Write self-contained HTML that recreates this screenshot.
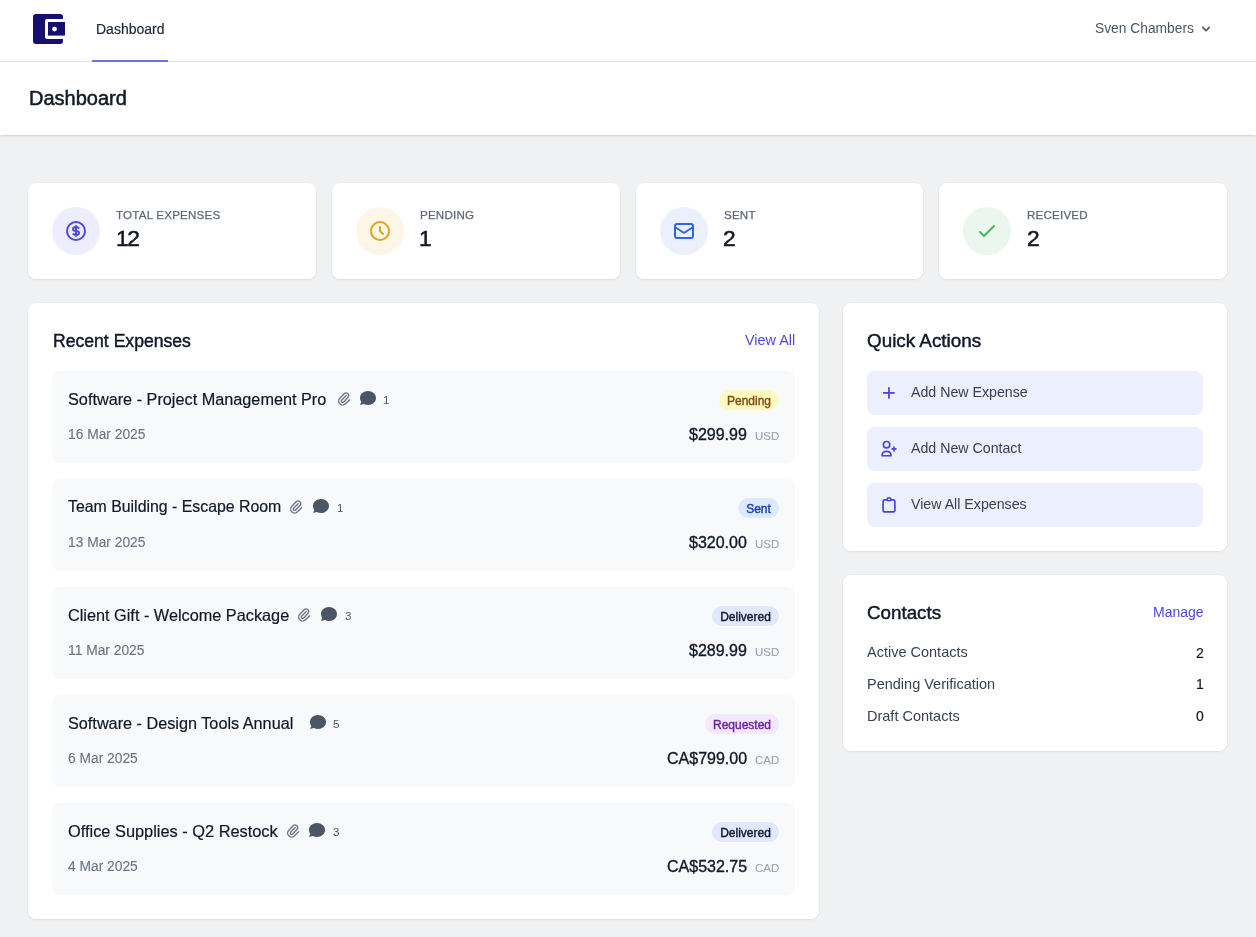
<!DOCTYPE html>
<html><head><meta charset="utf-8"><title>Dashboard</title>
<style>
html,body{margin:0;padding:0;}
body{width:1256px;height:937px;position:relative;overflow:hidden;background:#f0f1f3;font-family:"Liberation Sans",sans-serif;}
.t{position:absolute;white-space:nowrap;will-change:transform;}
svg{display:block;}
</style></head><body>
<div style="position:absolute;left:0px;top:0px;width:1256px;height:61px;background:#fff;border-radius:0px;"></div>
<div style="position:absolute;left:0px;top:61px;width:1256px;height:1px;background:#e5e7eb;border-radius:0px;"></div>
<svg style="position:absolute;left:33px;top:14px" width="32" height="30" viewBox="0 0 32 30">
<path d="M3 0H27A3 3 0 0 1 30 3V5H14A2 2 0 0 0 12 7V23A2 2 0 0 0 14 25H30V27A3 3 0 0 1 27 30H3A3 3 0 0 1 0 27V3A3 3 0 0 1 3 0Z" fill="#160f6e"/>
<rect x="15" y="8" width="17" height="13.6" fill="#160f6e"/>
<circle cx="21.5" cy="15.1" r="2.4" fill="#fff"/>
</svg>
<div class="t" style="left:95.80px;top:22.45px;font-size:14px;line-height:14px;color:#1f2937;font-weight:400;-webkit-text-stroke:0.2px #1f2937;">Dashboard</div>
<div style="position:absolute;left:92px;top:60px;width:76px;height:2px;background:#6e72f2;border-radius:0px;"></div>
<div class="t" style="right:61.80px;top:21.62px;font-size:13.8px;line-height:13.8px;color:#4b5563;font-weight:400;">Sven Chambers</div>
<svg style="position:absolute;left:1198px;top:21px" width="16" height="16" viewBox="0 0 20 20" fill="#4b5563"><path fill-rule="evenodd" d="M5.293 7.293a1 1 0 011.414 0L10 10.586l3.293-3.293a1 1 0 111.414 1.414l-4 4a1 1 0 01-1.414 0l-4-4a1 1 0 010-1.414z" clip-rule="evenodd"/></svg>
<div style="position:absolute;left:0px;top:62px;width:1256px;height:73px;background:#fff;border-radius:0px;box-shadow:0 1px 3px 0 rgba(0,0,0,0.1),0 1px 2px -1px rgba(0,0,0,0.1);"></div>
<div class="t" style="left:28.50px;top:88.07px;font-size:20px;line-height:20px;color:#111827;font-weight:400;-webkit-text-stroke:0.5px #111827;">Dashboard</div>
<div style="position:absolute;left:28.0px;top:183px;width:287.75px;height:96px;background:#fff;border-radius:8px;box-shadow:0 1px 2px 0 rgba(0,0,0,0.06),0 0 0 1px rgba(0,0,0,0.02);"></div>
<div style="position:absolute;left:52.0px;top:207px;width:48px;height:48px;background:#eeedfd;border-radius:24px;"></div>
<svg style="position:absolute;left:64.0px;top:219px" width="24" height="24" viewBox="0 0 24 24" fill="none" stroke="#4f46e5" stroke-width="2" stroke-linecap="round" stroke-linejoin="round"><path d="M12 8c-1.657 0-3 .895-3 2s1.343 2 3 2 3 .895 3 2-1.343 2-3 2m0-8c1.11 0 2.08.402 2.599 1M12 8V7m0 1v8m0 0v1m0-1c-1.11 0-2.08-.402-2.599-1M21 12a9 9 0 11-18 0 9 9 0 0118 0z"/></svg>
<div class="t" style="left:116.00px;top:208.98px;font-size:11.6px;line-height:11.6px;color:#5f6675;font-weight:400;letter-spacing:0.2px;-webkit-text-stroke:0.25px #5f6675;">TOTAL EXPENSES</div>
<div class="t" style="left:115.50px;top:227.10px;font-size:22.8px;line-height:22.8px;color:#111827;font-weight:400;letter-spacing:-1.4px;-webkit-text-stroke:0.5px #111827;">12</div>
<div style="position:absolute;left:331.75px;top:183px;width:287.75px;height:96px;background:#fff;border-radius:8px;box-shadow:0 1px 2px 0 rgba(0,0,0,0.06),0 0 0 1px rgba(0,0,0,0.02);"></div>
<div style="position:absolute;left:355.75px;top:207px;width:48px;height:48px;background:#fcf6e7;border-radius:24px;"></div>
<svg style="position:absolute;left:367.75px;top:219px" width="24" height="24" viewBox="0 0 24 24" fill="none" stroke="#d9a514" stroke-width="2" stroke-linecap="round" stroke-linejoin="round"><path d="M12 8v4l3 3m6-3a9 9 0 11-18 0 9 9 0 0118 0z"/></svg>
<div class="t" style="left:419.75px;top:208.98px;font-size:11.6px;line-height:11.6px;color:#5f6675;font-weight:400;letter-spacing:0.2px;-webkit-text-stroke:0.25px #5f6675;">PENDING</div>
<div class="t" style="left:419.25px;top:227.10px;font-size:22.8px;line-height:22.8px;color:#111827;font-weight:400;letter-spacing:-1.4px;-webkit-text-stroke:0.5px #111827;">1</div>
<div style="position:absolute;left:635.5px;top:183px;width:287.75px;height:96px;background:#fff;border-radius:8px;box-shadow:0 1px 2px 0 rgba(0,0,0,0.06),0 0 0 1px rgba(0,0,0,0.02);"></div>
<div style="position:absolute;left:659.5px;top:207px;width:48px;height:48px;background:#ebf0fc;border-radius:24px;"></div>
<svg style="position:absolute;left:671.5px;top:219px" width="24" height="24" viewBox="0 0 24 24" fill="none" stroke="#2f66e8" stroke-width="2" stroke-linecap="round" stroke-linejoin="round"><path d="M3 8l7.89 5.26a2 2 0 002.22 0L21 8M5 19h14a2 2 0 002-2V7a2 2 0 00-2-2H5a2 2 0 00-2 2v10a2 2 0 002 2z"/></svg>
<div class="t" style="left:723.50px;top:208.98px;font-size:11.6px;line-height:11.6px;color:#5f6675;font-weight:400;letter-spacing:0.2px;-webkit-text-stroke:0.25px #5f6675;">SENT</div>
<div class="t" style="left:723.00px;top:227.10px;font-size:22.8px;line-height:22.8px;color:#111827;font-weight:400;letter-spacing:-1.4px;-webkit-text-stroke:0.5px #111827;">2</div>
<div style="position:absolute;left:939.25px;top:183px;width:287.75px;height:96px;background:#fff;border-radius:8px;box-shadow:0 1px 2px 0 rgba(0,0,0,0.06),0 0 0 1px rgba(0,0,0,0.02);"></div>
<div style="position:absolute;left:963.25px;top:207px;width:48px;height:48px;background:#ebf6ee;border-radius:24px;"></div>
<svg style="position:absolute;left:975.25px;top:219px" width="24" height="24" viewBox="0 0 24 24" fill="none" stroke="#4ab85f" stroke-width="2" stroke-linecap="round" stroke-linejoin="round"><path d="M5 13l4 4L19 7"/></svg>
<div class="t" style="left:1027.25px;top:208.98px;font-size:11.6px;line-height:11.6px;color:#5f6675;font-weight:400;letter-spacing:0.2px;-webkit-text-stroke:0.25px #5f6675;">RECEIVED</div>
<div class="t" style="left:1026.75px;top:227.10px;font-size:22.8px;line-height:22.8px;color:#111827;font-weight:400;letter-spacing:-1.4px;-webkit-text-stroke:0.5px #111827;">2</div>
<div style="position:absolute;left:28px;top:303px;width:791.33px;height:616px;background:#fff;border-radius:8px;box-shadow:0 1px 2px 0 rgba(0,0,0,0.06),0 0 0 1px rgba(0,0,0,0.02);"></div>
<div class="t" style="left:52.50px;top:332.60px;font-size:17.6px;line-height:17.6px;color:#111827;font-weight:400;-webkit-text-stroke:0.45px #111827;">Recent Expenses</div>
<div class="t" style="right:460.50px;top:332.81px;font-size:14.4px;line-height:14.4px;color:#4f46e5;font-weight:400;">View All</div>
<div style="position:absolute;left:52px;top:371px;width:743px;height:92px;background:#f8f9fb;border-radius:8px;"></div>
<div class="t" style="left:67.50px;top:390.94px;font-size:16.25px;line-height:16.25px;color:#111827;font-weight:400;-webkit-text-stroke:0.2px #111827;">Software - Project Management Pro</div>
<svg style="position:absolute;left:335.8px;top:391px" width="16" height="16" viewBox="0 0 24 24" fill="none" stroke="#6b7280" stroke-width="2" stroke-linecap="round" stroke-linejoin="round"><path d="M15.172 7l-6.586 6.586a2 2 0 102.828 2.828l6.414-6.586a4 4 0 00-5.656-5.656l-6.415 6.585a6 6 0 108.486 8.486L20.5 13"/></svg>
<svg style="position:absolute;left:358.0px;top:388px" width="20" height="20" viewBox="0 0 20 20" fill="#4b5563"><path fill-rule="evenodd" d="M18 10c0 3.866-3.582 7-8 7a8.841 8.841 0 01-4.083-.98L2 17l1.338-3.123C2.493 12.767 2 11.434 2 10c0-3.866 3.582-7 8-7s8 3.134 8 7z" clip-rule="evenodd"/></svg>
<div class="t" style="left:383.40px;top:394.87px;font-size:11.5px;line-height:11.5px;color:#4b5563;font-weight:400;">1</div>
<div class="t" style="left:67.80px;top:427.52px;font-size:13.8px;line-height:13.8px;color:#6b7280;font-weight:400;-webkit-text-stroke:0.1px #6b7280;">16 Mar 2025</div>
<div style="position:absolute;left:719px;top:390px;width:60px;height:20px;border-radius:10px;background:#fef9c3;"></div>
<div class="t" style="left:749.00px;top:394.74px;font-size:12px;line-height:12px;color:#854d0e;font-weight:400;-webkit-text-stroke:0.4px #854d0e;width:60px;margin-left:-30.0px;text-align:center;">Pending</div>
<div class="t" style="right:476.50px;top:430.67px;font-size:11.5px;line-height:11.5px;color:#9ca3af;font-weight:400;-webkit-text-stroke:0.1px #9ca3af;">USD</div>
<div class="t" style="right:508.80px;top:427.16px;font-size:16px;line-height:16px;color:#111827;font-weight:400;-webkit-text-stroke:0.35px #111827;">$299.99</div>
<div style="position:absolute;left:52px;top:479px;width:743px;height:92px;background:#f8f9fb;border-radius:8px;"></div>
<div class="t" style="left:67.50px;top:499.27px;font-size:15.87px;line-height:15.87px;color:#111827;font-weight:400;-webkit-text-stroke:0.2px #111827;">Team Building - Escape Room</div>
<svg style="position:absolute;left:288.4px;top:499px" width="16" height="16" viewBox="0 0 24 24" fill="none" stroke="#6b7280" stroke-width="2" stroke-linecap="round" stroke-linejoin="round"><path d="M15.172 7l-6.586 6.586a2 2 0 102.828 2.828l6.414-6.586a4 4 0 00-5.656-5.656l-6.415 6.585a6 6 0 108.486 8.486L20.5 13"/></svg>
<svg style="position:absolute;left:311.0px;top:496px" width="20" height="20" viewBox="0 0 20 20" fill="#4b5563"><path fill-rule="evenodd" d="M18 10c0 3.866-3.582 7-8 7a8.841 8.841 0 01-4.083-.98L2 17l1.338-3.123C2.493 12.767 2 11.434 2 10c0-3.866 3.582-7 8-7s8 3.134 8 7z" clip-rule="evenodd"/></svg>
<div class="t" style="left:337.20px;top:502.87px;font-size:11.5px;line-height:11.5px;color:#4b5563;font-weight:400;">1</div>
<div class="t" style="left:67.80px;top:535.52px;font-size:13.8px;line-height:13.8px;color:#6b7280;font-weight:400;-webkit-text-stroke:0.1px #6b7280;">13 Mar 2025</div>
<div style="position:absolute;left:738px;top:498px;width:41px;height:20px;border-radius:10px;background:#dbeafe;"></div>
<div class="t" style="left:758.50px;top:502.74px;font-size:12px;line-height:12px;color:#1e40af;font-weight:400;-webkit-text-stroke:0.4px #1e40af;width:41px;margin-left:-20.5px;text-align:center;">Sent</div>
<div class="t" style="right:476.50px;top:538.67px;font-size:11.5px;line-height:11.5px;color:#9ca3af;font-weight:400;-webkit-text-stroke:0.1px #9ca3af;">USD</div>
<div class="t" style="right:508.80px;top:535.16px;font-size:16px;line-height:16px;color:#111827;font-weight:400;-webkit-text-stroke:0.35px #111827;">$320.00</div>
<div style="position:absolute;left:52px;top:587px;width:743px;height:92px;background:#f8f9fb;border-radius:8px;"></div>
<div class="t" style="left:67.50px;top:606.92px;font-size:16.28px;line-height:16.28px;color:#111827;font-weight:400;-webkit-text-stroke:0.2px #111827;">Client Gift - Welcome Package</div>
<svg style="position:absolute;left:296.4px;top:607px" width="16" height="16" viewBox="0 0 24 24" fill="none" stroke="#6b7280" stroke-width="2" stroke-linecap="round" stroke-linejoin="round"><path d="M15.172 7l-6.586 6.586a2 2 0 102.828 2.828l6.414-6.586a4 4 0 00-5.656-5.656l-6.415 6.585a6 6 0 108.486 8.486L20.5 13"/></svg>
<svg style="position:absolute;left:318.9px;top:604px" width="20" height="20" viewBox="0 0 20 20" fill="#4b5563"><path fill-rule="evenodd" d="M18 10c0 3.866-3.582 7-8 7a8.841 8.841 0 01-4.083-.98L2 17l1.338-3.123C2.493 12.767 2 11.434 2 10c0-3.866 3.582-7 8-7s8 3.134 8 7z" clip-rule="evenodd"/></svg>
<div class="t" style="left:345.10px;top:610.87px;font-size:11.5px;line-height:11.5px;color:#4b5563;font-weight:400;">3</div>
<div class="t" style="left:67.80px;top:643.52px;font-size:13.8px;line-height:13.8px;color:#6b7280;font-weight:400;-webkit-text-stroke:0.1px #6b7280;">11 Mar 2025</div>
<div style="position:absolute;left:712px;top:606px;width:67px;height:20px;border-radius:10px;background:#e0e7ff;"></div>
<div class="t" style="left:745.50px;top:610.74px;font-size:12px;line-height:12px;color:#111827;font-weight:400;-webkit-text-stroke:0.4px #111827;width:67px;margin-left:-33.5px;text-align:center;">Delivered</div>
<div class="t" style="right:476.50px;top:646.67px;font-size:11.5px;line-height:11.5px;color:#9ca3af;font-weight:400;-webkit-text-stroke:0.1px #9ca3af;">USD</div>
<div class="t" style="right:508.80px;top:643.16px;font-size:16px;line-height:16px;color:#111827;font-weight:400;-webkit-text-stroke:0.35px #111827;">$289.99</div>
<div style="position:absolute;left:52px;top:695px;width:743px;height:92px;background:#f8f9fb;border-radius:8px;"></div>
<div class="t" style="left:67.50px;top:714.95px;font-size:16.24px;line-height:16.24px;color:#111827;font-weight:400;-webkit-text-stroke:0.2px #111827;">Software - Design Tools Annual</div>
<svg style="position:absolute;left:307.7px;top:712px" width="20" height="20" viewBox="0 0 20 20" fill="#4b5563"><path fill-rule="evenodd" d="M18 10c0 3.866-3.582 7-8 7a8.841 8.841 0 01-4.083-.98L2 17l1.338-3.123C2.493 12.767 2 11.434 2 10c0-3.866 3.582-7 8-7s8 3.134 8 7z" clip-rule="evenodd"/></svg>
<div class="t" style="left:333.00px;top:718.87px;font-size:11.5px;line-height:11.5px;color:#4b5563;font-weight:400;">5</div>
<div class="t" style="left:67.80px;top:751.52px;font-size:13.8px;line-height:13.8px;color:#6b7280;font-weight:400;-webkit-text-stroke:0.1px #6b7280;">6 Mar 2025</div>
<div style="position:absolute;left:705px;top:714px;width:74px;height:20px;border-radius:10px;background:#f3e8ff;"></div>
<div class="t" style="left:742.00px;top:718.74px;font-size:12px;line-height:12px;color:#6b21a8;font-weight:400;-webkit-text-stroke:0.4px #6b21a8;width:74px;margin-left:-37.0px;text-align:center;">Requested</div>
<div class="t" style="right:476.50px;top:754.67px;font-size:11.5px;line-height:11.5px;color:#9ca3af;font-weight:400;-webkit-text-stroke:0.1px #9ca3af;">CAD</div>
<div class="t" style="right:508.80px;top:751.16px;font-size:16px;line-height:16px;color:#111827;font-weight:400;-webkit-text-stroke:0.35px #111827;">CA$799.00</div>
<div style="position:absolute;left:52px;top:803px;width:743px;height:92px;background:#f8f9fb;border-radius:8px;"></div>
<div class="t" style="left:67.50px;top:822.85px;font-size:16.36px;line-height:16.36px;color:#111827;font-weight:400;-webkit-text-stroke:0.2px #111827;">Office Supplies - Q2 Restock</div>
<svg style="position:absolute;left:284.6px;top:823px" width="16" height="16" viewBox="0 0 24 24" fill="none" stroke="#6b7280" stroke-width="2" stroke-linecap="round" stroke-linejoin="round"><path d="M15.172 7l-6.586 6.586a2 2 0 102.828 2.828l6.414-6.586a4 4 0 00-5.656-5.656l-6.415 6.585a6 6 0 108.486 8.486L20.5 13"/></svg>
<svg style="position:absolute;left:307.0px;top:820px" width="20" height="20" viewBox="0 0 20 20" fill="#4b5563"><path fill-rule="evenodd" d="M18 10c0 3.866-3.582 7-8 7a8.841 8.841 0 01-4.083-.98L2 17l1.338-3.123C2.493 12.767 2 11.434 2 10c0-3.866 3.582-7 8-7s8 3.134 8 7z" clip-rule="evenodd"/></svg>
<div class="t" style="left:333.00px;top:826.87px;font-size:11.5px;line-height:11.5px;color:#4b5563;font-weight:400;">3</div>
<div class="t" style="left:67.80px;top:859.52px;font-size:13.8px;line-height:13.8px;color:#6b7280;font-weight:400;-webkit-text-stroke:0.1px #6b7280;">4 Mar 2025</div>
<div style="position:absolute;left:712px;top:822px;width:67px;height:20px;border-radius:10px;background:#e0e7ff;"></div>
<div class="t" style="left:745.50px;top:826.74px;font-size:12px;line-height:12px;color:#111827;font-weight:400;-webkit-text-stroke:0.4px #111827;width:67px;margin-left:-33.5px;text-align:center;">Delivered</div>
<div class="t" style="right:476.50px;top:862.67px;font-size:11.5px;line-height:11.5px;color:#9ca3af;font-weight:400;-webkit-text-stroke:0.1px #9ca3af;">CAD</div>
<div class="t" style="right:508.80px;top:859.16px;font-size:16px;line-height:16px;color:#111827;font-weight:400;-webkit-text-stroke:0.35px #111827;">CA$532.75</div>
<div style="position:absolute;left:843.33px;top:303px;width:383.67px;height:248px;background:#fff;border-radius:8px;box-shadow:0 1px 2px 0 rgba(0,0,0,0.06),0 0 0 1px rgba(0,0,0,0.02);"></div>
<div class="t" style="left:867.33px;top:331.64px;font-size:18.85px;line-height:18.85px;color:#111827;font-weight:400;-webkit-text-stroke:0.45px #111827;">Quick Actions</div>
<div style="position:absolute;left:867.33px;top:371px;width:335.67px;height:44px;background:#eceffd;border-radius:8px;"></div>
<svg style="position:absolute;left:876px;top:380px" width="26" height="26" viewBox="0 0 26 26" fill="none" stroke="#4a43dc" stroke-width="1.7" stroke-linecap="round" stroke-linejoin="round"><path d="M12.9 7.8V18M7.8 12.9H18"/></svg>
<div class="t" style="left:911.30px;top:385.48px;font-size:14.2px;line-height:14.2px;color:#374151;font-weight:400;">Add New Expense</div>
<div style="position:absolute;left:867.33px;top:427px;width:335.67px;height:44px;background:#eceffd;border-radius:8px;"></div>
<svg style="position:absolute;left:876px;top:436px" width="26" height="26" viewBox="0 0 26 26" fill="none" stroke="#4a43dc" stroke-width="1.7" stroke-linecap="round" stroke-linejoin="round"><circle cx="10.6" cy="8.7" r="3.2"/><path d="M6.15 19.75V18.7C6.15 16.8 8.1 15.3 10.55 15.3S14.95 16.8 14.95 18.7V19.75Z"/><path d="M18 11V14.8M16.1 12.9H19.9"/></svg>
<div class="t" style="left:911.30px;top:441.48px;font-size:14.2px;line-height:14.2px;color:#374151;font-weight:400;">Add New Contact</div>
<div style="position:absolute;left:867.33px;top:483px;width:335.67px;height:44px;background:#eceffd;border-radius:8px;"></div>
<svg style="position:absolute;left:876px;top:492px" width="26" height="26" viewBox="0 0 26 26" fill="none" stroke="#4a43dc" stroke-width="1.7" stroke-linecap="round" stroke-linejoin="round"><rect x="7.1" y="7.95" width="11.75" height="11.95" rx="1.5"/><rect x="11.2" y="5.75" width="3.6" height="3.0" rx="1.5" fill="#eceffd"/></svg>
<div class="t" style="left:911.30px;top:497.48px;font-size:14.2px;line-height:14.2px;color:#374151;font-weight:400;">View All Expenses</div>
<div style="position:absolute;left:843.33px;top:575px;width:383.67px;height:176px;background:#fff;border-radius:8px;box-shadow:0 1px 2px 0 rgba(0,0,0,0.06),0 0 0 1px rgba(0,0,0,0.02);"></div>
<div class="t" style="left:867.33px;top:604.39px;font-size:18.8px;line-height:18.8px;color:#111827;font-weight:400;-webkit-text-stroke:0.45px #111827;">Contacts</div>
<div class="t" style="right:52.50px;top:605.35px;font-size:14px;line-height:14px;color:#4f46e5;font-weight:400;">Manage</div>
<div class="t" style="left:867.30px;top:645.23px;font-size:14.5px;line-height:14.5px;color:#374151;font-weight:400;">Active Contacts</div>
<div class="t" style="right:52.70px;top:645.65px;font-size:14px;line-height:14px;color:#111827;font-weight:400;-webkit-text-stroke:0.2px #111827;">2</div>
<div class="t" style="left:867.30px;top:677.03px;font-size:14.5px;line-height:14.5px;color:#374151;font-weight:400;">Pending Verification</div>
<div class="t" style="right:52.70px;top:677.45px;font-size:14px;line-height:14px;color:#111827;font-weight:400;-webkit-text-stroke:0.2px #111827;">1</div>
<div class="t" style="left:867.30px;top:708.73px;font-size:14.5px;line-height:14.5px;color:#374151;font-weight:400;">Draft Contacts</div>
<div class="t" style="right:52.70px;top:709.15px;font-size:14px;line-height:14px;color:#111827;font-weight:400;-webkit-text-stroke:0.2px #111827;">0</div>
</body></html>
